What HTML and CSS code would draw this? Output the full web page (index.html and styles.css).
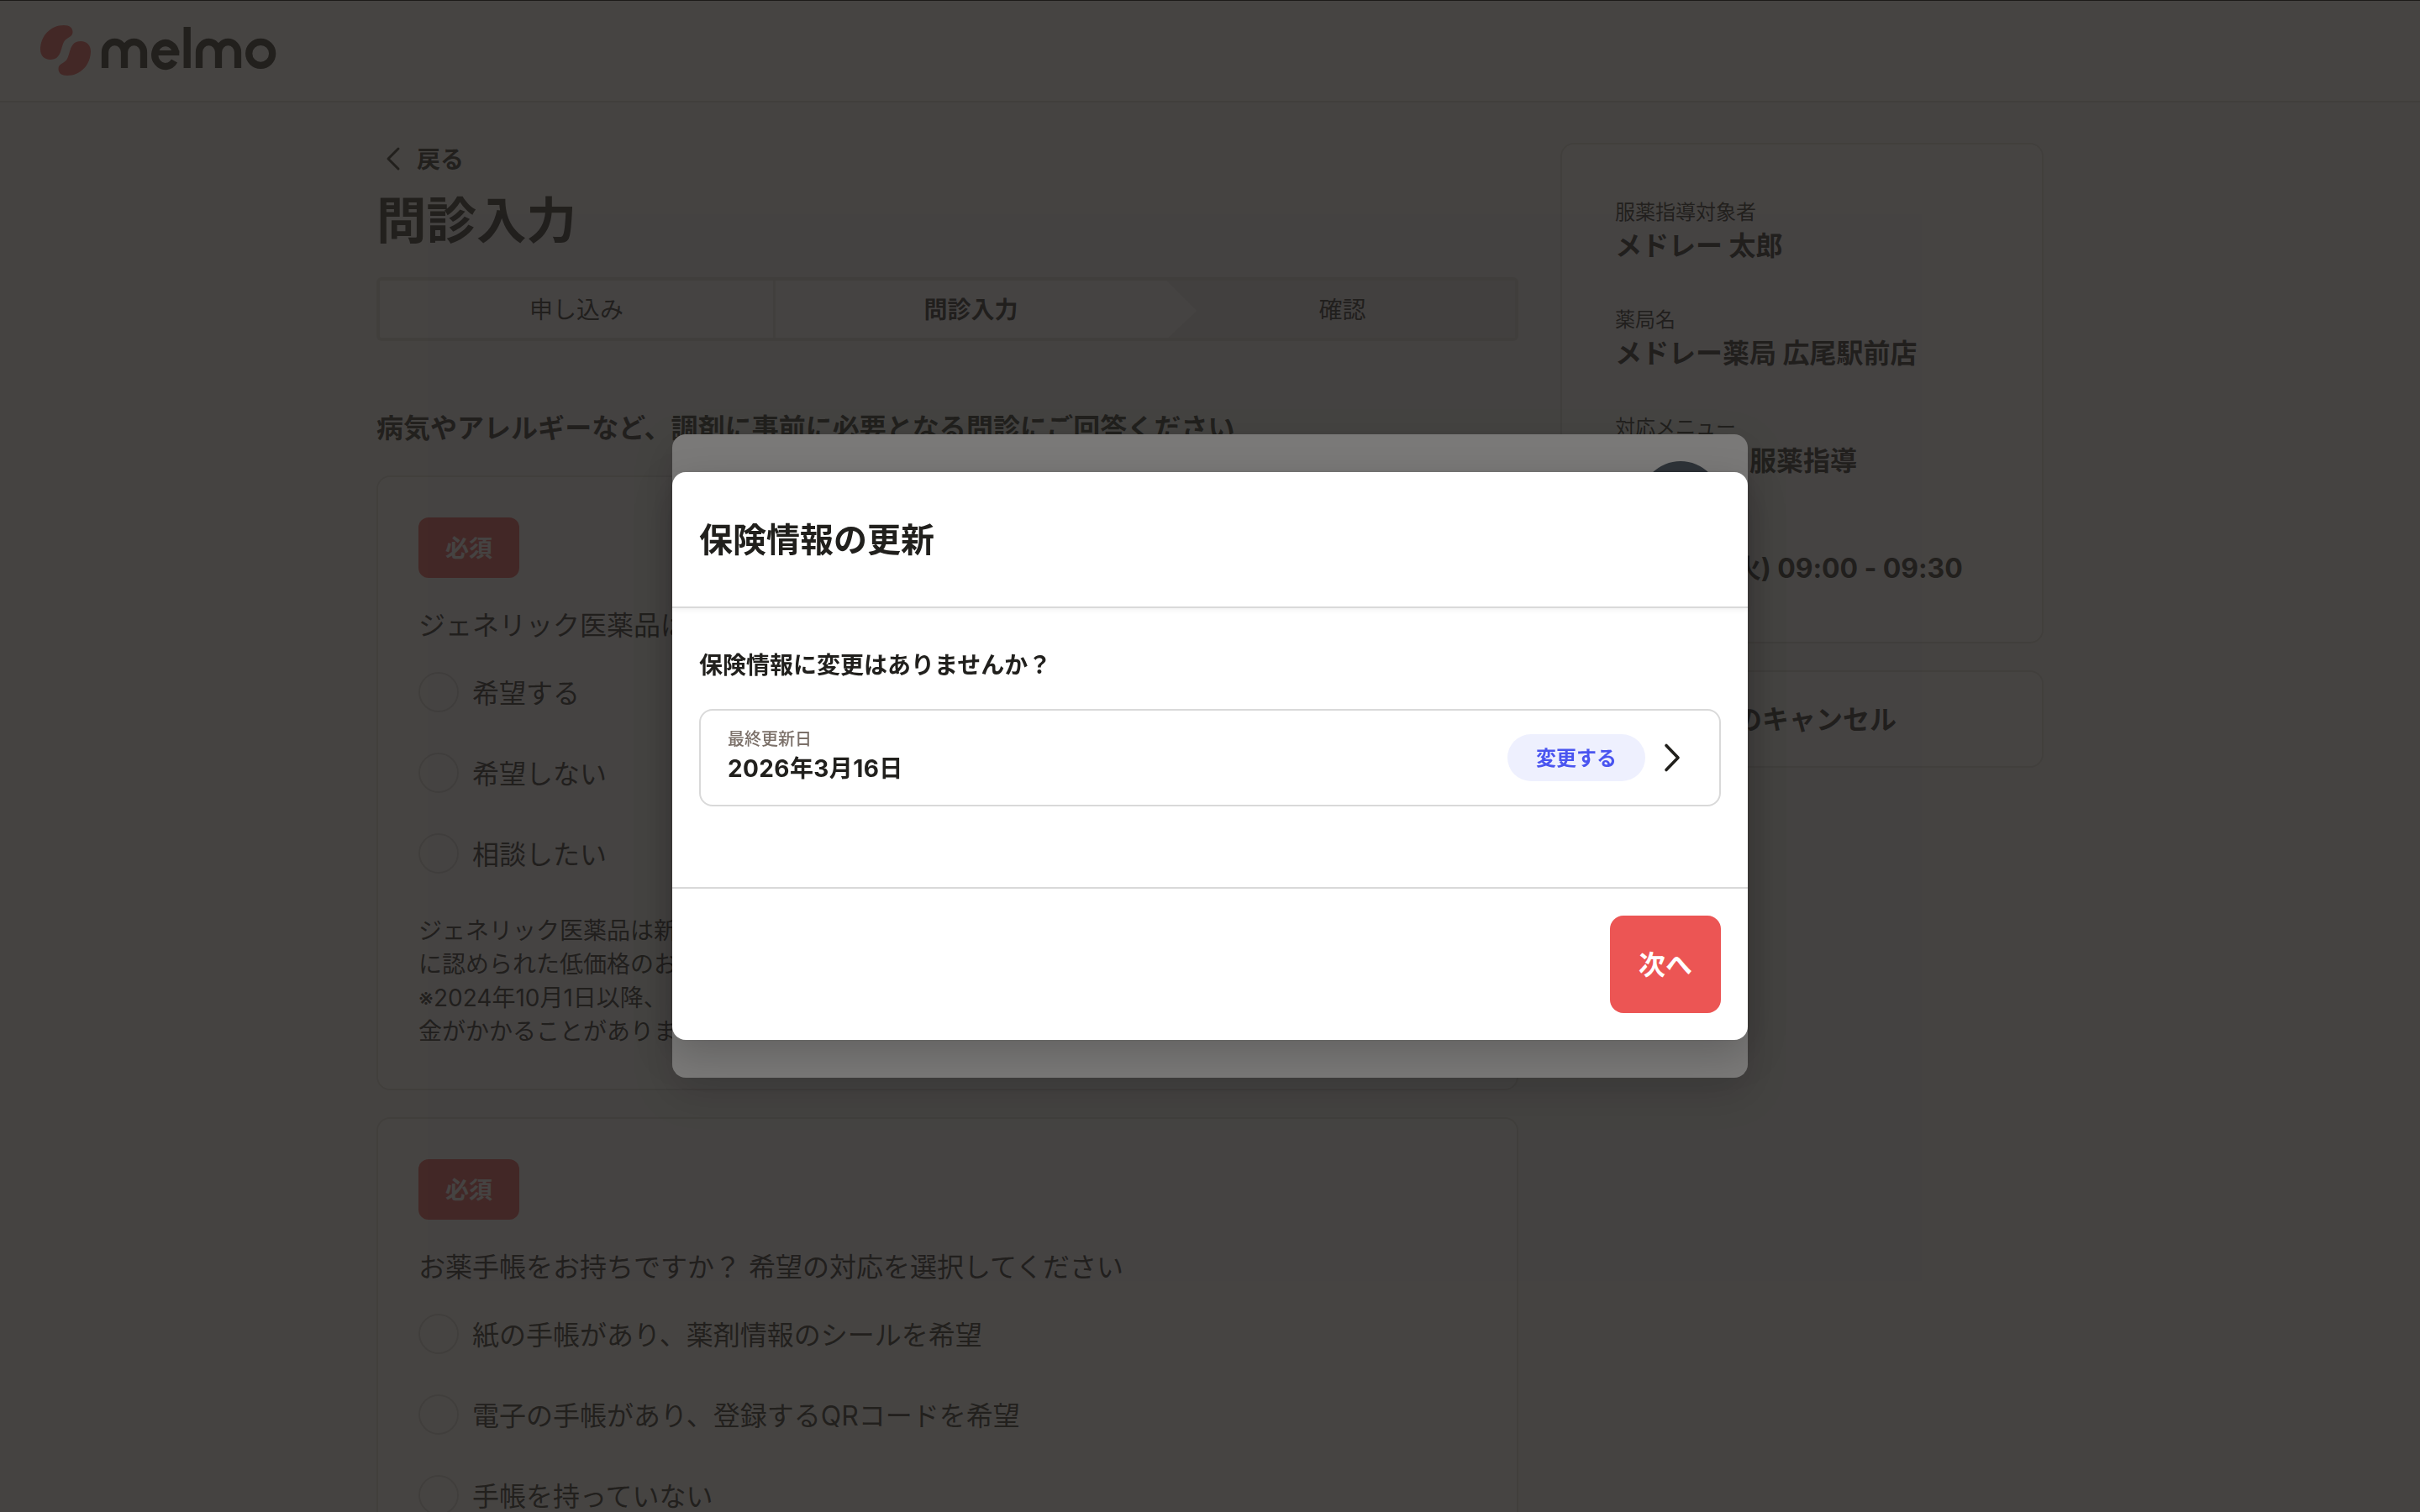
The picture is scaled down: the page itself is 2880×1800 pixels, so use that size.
FILE: index.html
```html
<!DOCTYPE html>
<html lang="ja">
<head>
<meta charset="utf-8">
<title>問診入力 | melmo</title>
<link rel="stylesheet" href="styles.css">
</head>
<body>
<div class="page">
  <header class="header">
    <svg class="logo-mark" width="60" height="60" viewBox="0 0 60 60"><path id="bean" d="M0 29C0 13 12 0 28 0C35 0 38.500 3 38.500 8C38.500 14 33 14 29 18.500C24 25 26 41 12 41C4.500 41 0 36 0 29Z"/><use href="#bean" transform="rotate(180 30 30)"/></svg>
    <svg class="logo-word" width="210" height="52" viewBox="0 0 210 52"><path d="M5 49V30A11.500 12 0 0 1 28 30V49M28 30A11.500 12 0 0 1 51 30V49M89.300 31A12.600 14 0 1 0 87.500 40.500M102.700 0V49M117 49V30A11.500 12 0 0 1 140 30V49M140 30A11.500 12 0 0 1 163 30V49"/><path class="bar" d="M64 31H93.300"/><ellipse cx="190.200" cy="31.800" rx="14" ry="14"/></svg>
  </header>
  <main class="layout">
    <section class="main">
      <a class="back"><svg width="20" height="30" viewBox="0 0 20 30"><path d="M16 3L4 15L16 27"/></svg><span>戻る</span></a>
      <h1 class="title">問診入力</h1>
      <ol class="steps"><li class="step">申し込み</li><li class="step current">問診入力</li><li class="step next">確認</li></ol>
      <h2 class="lead">病気やアレルギーなど、調剤に事前に必要となる問診にご回答ください</h2>
      <div class="card">
        <span class="badge">必須</span>
        <p class="question">ジェネリック医薬品は</p>
        <div class="options">
          <label class="option"><i class="radio"></i><span>希望する</span></label>
          <label class="option"><i class="radio"></i><span>希望しない</span></label>
          <label class="option"><i class="radio"></i><span>相談したい</span></label>
        </div>
        <p class="note">ジェネリック医薬品は新<br>に認められた低価格のお<br>※2024年10月1日以降、<br>金がかかることがありま</p>
      </div>
      <div class="card">
        <span class="badge">必須</span>
        <p class="question">お薬手帳をお持ちですか？ 希望の対応を選択してください</p>
        <div class="options">
          <label class="option"><i class="radio"></i><span>紙の手帳があり、薬剤情報のシールを希望</span></label>
          <label class="option"><i class="radio"></i><span>電子の手帳があり、登録するQRコードを希望</span></label>
          <label class="option"><i class="radio"></i><span>手帳を持っていない</span></label>
        </div>
      </div>
    </section>
    <aside class="side">
      <dl class="summary">
        <div><dt>服薬指導対象者</dt><dd>メドレー 太郎</dd></div>
        <div><dt>薬局名</dt><dd>メドレー薬局 広尾駅前店</dd></div>
        <div><dt>対応メニュー</dt><dd class="indent-menu">服薬指導</dd></div>
        <div><dt>&nbsp;</dt><dd class="indent-date">(火) 09:00 - 09:30</dd></div>
      </dl>
      <div class="cancel">のキャンセル</div>
    </aside>
  </main>
</div>
<div class="overlay"><div class="sheet"><span class="sheet-close"></span></div></div>
<div class="overlay">
  <div class="dialog">
    <div class="dialog-head">保険情報の更新</div>
    <div class="dialog-body">
      <p class="ask">保険情報に変更はありませんか？</p>
      <div class="record">
        <div class="record-text"><span class="record-label">最終更新日</span><span class="record-date">2026年3月16日</span></div>
        <span class="pill">変更する</span>
        <svg class="chevron" width="24" height="36" viewBox="0 0 24 36"><path d="M5 3.500L19 18L5 32.500"/></svg>
      </div>
    </div>
    <div class="dialog-foot"><button class="next-button">次へ</button></div>
  </div>
</div>
</body>
</html>
```
FILE: styles.css
```css
* { box-sizing: border-box; margin: 0; padding: 0; }
body {
  width: 2880px; height: 1800px; overflow: hidden;
  background: #f9f9f8; color: #21201d;
  font-family: Inter, "Noto Sans CJK JP", sans-serif;
}
.page { height: 1800px; overflow: hidden; border-top: 1px solid #000; }
.header { height: 121px; background: #fff; border-bottom: 2px solid #dddcd9; display: flex; align-items: flex-start; padding: 29px 48px 0; }
.logo-mark { fill: #ec5554; }
.logo-word { margin: 2px 0 0 12px; fill: none; stroke: #21201c; stroke-width: 8.3; }
.logo-word .bar { stroke-width: 6; }
.layout { display: flex; gap: 50px; padding: 48px 0 0 448px; align-items: flex-start; }
.main { width: 1359px; }
.back { display: flex; align-items: center; gap: 18px; height: 38px; padding-left: 10px; font-size: 28px; font-weight: 700; }
.back span { padding-bottom: 2px; }
.back svg { fill: none; stroke: #21201c; stroke-width: 3; stroke-linecap: round; stroke-linejoin: round; }
.title { font-size: 59.5px; line-height: 80px; margin-top: 14px; }
.steps { display: flex; list-style: none; height: 76px; margin-top: 28px; border: 4px solid #dfdedb; border-radius: 6px; background: #fff; }
.step { width: 468px; display: flex; align-items: center; justify-content: center; font-size: 28px; padding-bottom: 3px; }
.step + .step { border-left: 3px solid #e4e3e0; }
.step.current { font-weight: 700; }
.step.next { position: relative; flex: 1; border: 0; background: #edece9; padding-left: 4px; }
.step.next::before { content: ""; position: absolute; left: 0; top: 0; width: 36px; height: 100%; background: #fff; clip-path: polygon(0 0, 100% 53%, 6% 100%, 0 100%); }
.lead { font-size: 32px; line-height: 48px; margin-top: 80px; letter-spacing: .02px; }
.card { border: 2px solid #dfdedb; border-radius: 16px; background: #fff; padding: 48px; margin-top: 32px; height: 732px; }
.badge { display: flex; width: 120px; height: 72px; border-radius: 12px; background: #ec5554; color: #fff; font-size: 28px; font-weight: 700; align-items: center; justify-content: center; padding-bottom: 3px; }
.question { font-size: 32px; line-height: 48px; margin-top: 33px; }
.options { margin-top: 31px; display: flex; flex-direction: column; gap: 48px; }
.option { display: flex; align-items: center; gap: 16px; height: 48px; font-size: 32px; }
.option span { padding-bottom: 3px; }
.radio { width: 48px; height: 48px; border: 2px solid #dad9d6; border-radius: 50%; }
.note { font-size: 28px; line-height: 40px; margin-top: 48px; }
.side { width: 575px; }
.summary { border: 2px solid #dfdedb; border-radius: 16px; background: #fff; height: 596px; padding: 63px 0 0 63px; display: flex; flex-direction: column; gap: 48px; }
.summary div { height: 80px; }
.summary dt { font-size: 24px; line-height: 36px; }
.summary dd { font-size: 32px; line-height: 44px; font-weight: 700; }
.cancel { border: 2px solid #dfdedb; border-radius: 16px; background: #fff; height: 116px; margin-top: 32px; display: flex; align-items: center; padding: 0 0 5px 206px; font-size: 32px; font-weight: 700; }
.summary .indent-menu { padding-left: 160px; }
.summary .indent-date { padding-left: 130px; white-space: nowrap; letter-spacing: -.1px; }
.overlay { position: fixed; inset: 0; background: rgba(34, 32, 30, .6); display: flex; align-items: center; justify-content: center; }
.sheet { width: 1280px; height: 766px; border-radius: 16px; background: #fff; box-shadow: 0 16px 48px rgba(0,0,0,.2); display: flex; justify-content: flex-end; padding: 32px; }
.sheet-close { width: 96px; height: 96px; border-radius: 50%; background: #42505f; }
.dialog { width: 1280px; height: 676px; border-radius: 16px; background: #fff; box-shadow: 0 16px 48px rgba(0,0,0,.2); display: flex; flex-direction: column; }
.dialog-head { height: 162px; border-bottom: 2px solid #d9d9d9; box-shadow: 0 2px 6px rgba(0,0,0,.06); display: flex; align-items: center; padding: 0 0 5px 32px; font-size: 40px; font-weight: 700; }
.dialog-body { flex: 1; padding: 48px 32px; }
.ask { font-size: 28px; line-height: 40px; font-weight: 700; }
.record { margin-top: 32px; height: 116px; border: 2px solid #d9d9d9; border-radius: 16px; display: flex; align-items: center; padding: 0 44px 0 32px; }
.record-text { flex: 1; display: flex; flex-direction: column; padding-bottom: 4px; }
.record-label { font-size: 20px; line-height: 30px; font-weight: 500; color: #7b7069; }
.record-date { font-size: 28px; line-height: 40px; font-weight: 700; letter-spacing: .4px; }
.pill { width: 164px; height: 56px; border-radius: 28px; background: #eef0fe; color: #4a55f0; font-size: 24px; font-weight: 700; display: flex; align-items: center; justify-content: center; padding-bottom: 3px; }
.chevron { margin-left: 20px; fill: none; stroke: #21201c; stroke-width: 3.6; stroke-linecap: round; stroke-linejoin: round; }
.dialog-foot { height: 182px; border-top: 2px solid #d9d9d9; padding: 32px; display: flex; justify-content: flex-end; }
.next-button { width: 132px; height: 116px; padding-bottom: 4px; border: 0; border-radius: 16px; background: #ec5554; color: #fff; font: 700 32px Inter, "Noto Sans CJK JP", sans-serif; }
```
